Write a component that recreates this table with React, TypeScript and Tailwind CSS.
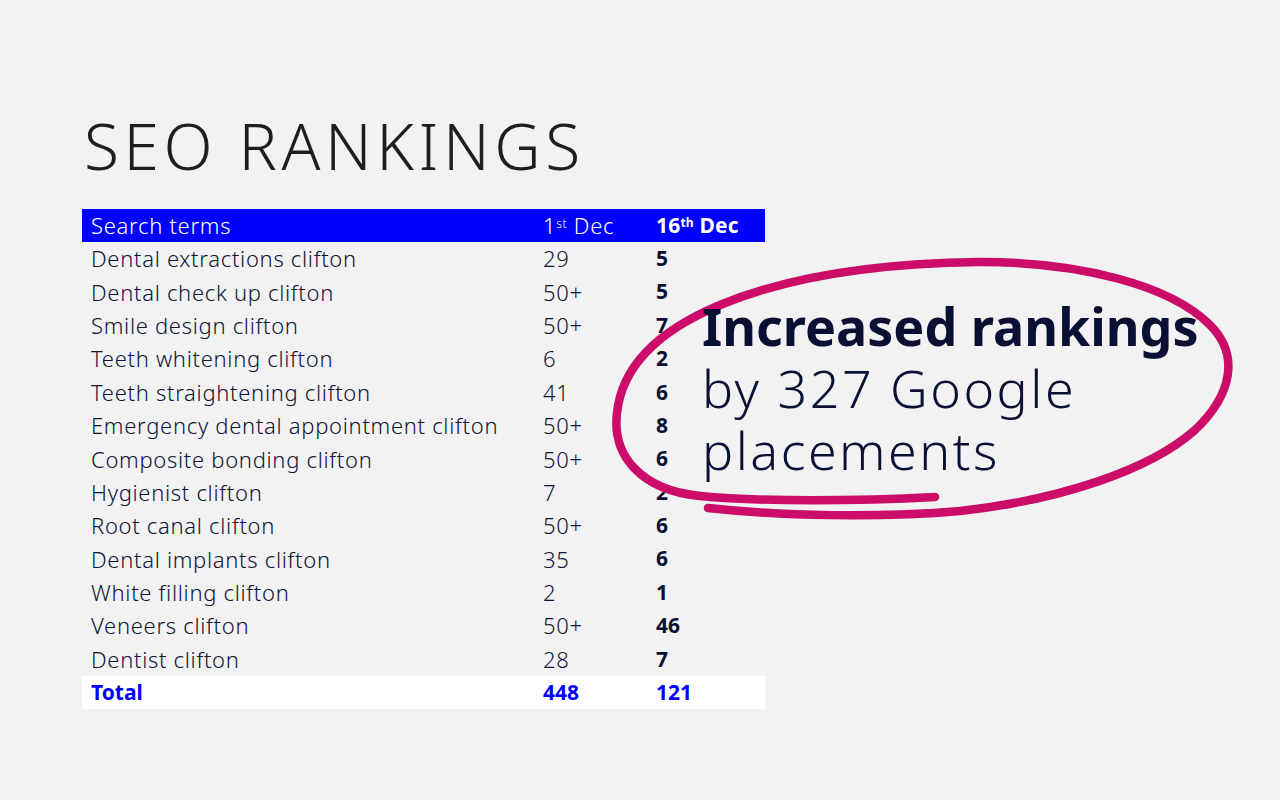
import React from "react";

const rows: [string, string, string][] = [
  ["Dental extractions clifton", "29", "5"],
  ["Dental check up clifton", "50+", "5"],
  ["Smile design clifton", "50+", "7"],
  ["Teeth whitening clifton", "6", "2"],
  ["Teeth straightening clifton", "41", "6"],
  ["Emergency dental appointment clifton", "50+", "8"],
  ["Composite bonding clifton", "50+", "6"],
  ["Hygienist clifton", "7", "2"],
  ["Root canal clifton", "50+", "6"],
  ["Dental implants clifton", "35", "6"],
  ["White filling clifton", "2", "1"],
  ["Veneers clifton", "50+", "46"],
  ["Dentist clifton", "28", "7"],
];

export default function App() {
  return (
    <div className="relative w-[1280px] h-[800px] overflow-hidden bg-[#f1f2f1] font-['Noto_Sans',sans-serif]">
      <div className="pl-[84px] pt-[106px]">
        <h1 className="text-[64px] leading-[80px] font-light tracking-[4.6px] text-[#1e1e1e]">
          SEO RANKINGS
        </h1>
      </div>
      <div className="ml-[82px] mt-[23px] w-[683px] text-[22px] tracking-[0.7px] text-[#0f1438]">
        <div className="flex h-[33px] items-center bg-[#0000ff] text-white">
          <div className="w-[452px] pl-[9px] font-light">Search terms</div>
          <div className="w-[113px] pl-[9px] font-light">
            1<sup className="text-[12px]">st</sup> Dec
          </div>
          <div className="pl-[9px] font-bold text-[21px] tracking-[0.2px]">
            16<sup className="text-[12px]">th</sup> Dec
          </div>
        </div>
        {rows.map(([t, a, b]) => (
          <div key={t} className="flex h-[33.4px] items-center">
            <div className="w-[452px] pl-[9px] font-light">{t}</div>
            <div className="w-[113px] pl-[9px] font-light">{a}</div>
            <div className="pl-[9px] font-bold text-[21px] tracking-normal text-[#0a1034]">{b}</div>
          </div>
        ))}
        <div className="flex h-[33px] items-center bg-white font-bold text-[21px] tracking-normal text-[#0000ff]">
          <div className="w-[452px] pl-[9px]">Total</div>
          <div className="w-[113px] pl-[9px]">448</div>
          <div className="pl-[9px]">121</div>
        </div>
      </div>

      <svg
        className="absolute left-0 top-0 pointer-events-none"
        width="1280"
        height="800"
        viewBox="0 0 1280 800"
      >
        <path
          d="M935,497 C 860,501 760,502 700,496 C 640,490 612,455 617,413 C 622,365 660,330 720,305 C 790,276 880,263 980,262 C 1080,262 1170,285 1210,325 C 1240,355 1232,395 1195,430 C 1150,470 1060,500 960,511 C 880,518 780,516 708,508"
          fill="none"
          stroke="#cb0c68"
          strokeWidth="8.5"
          strokeLinecap="round"
          strokeLinejoin="round"
        />
      </svg>

      <div className="absolute left-[702px] top-[295px] text-[#0a1034] text-[52px] leading-[62px]">
        <div className="font-bold">Increased rankings</div>
        <div className="font-light tracking-[2.5px]">by 327 Google</div>
        <div className="font-light tracking-[2.5px]">placements</div>
      </div>
    </div>
  );
}
